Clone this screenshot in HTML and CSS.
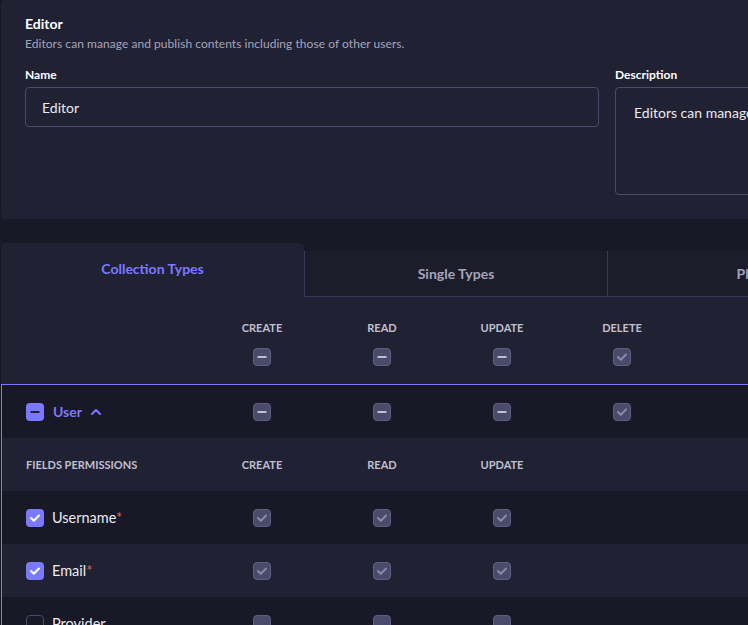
FILE: index.html
```html
<!DOCTYPE html>
<html lang="en">
<head>
<meta charset="utf-8">
<title>Editor role</title>
<link rel="stylesheet" href="styles.css">
</head>
<body>
<div class="page">
  <section class="card">
    <h1 class="title">Editor</h1>
    <p class="subtitle">Editors can manage and publish contents including those of other users.</p>
    <div class="form">
      <div class="field">
        <label class="label">Name</label>
        <div class="input">Editor</div>
      </div>
      <div class="field">
        <label class="label">Description</label>
        <div class="textarea">Editors can manage and publish contents including those of other users.</div>
      </div>
    </div>
  </section>

  <section class="perms">
    <div class="tabs">
      <div class="tab active">Collection Types</div>
      <div class="tab">Single Types</div>
      <div class="tab">Plugins</div>
      <div class="tab">Settings</div>
    </div>
    <div class="panel">
      <div class="grid head">
        <div></div>
        <div class="colhead"><span class="collabel">Create</span><span class="cb cb-dis"><svg viewBox="0 0 18 18"><rect x="4.5" y="8" width="9" height="2" rx="0.5" class="mark-minus"/></svg></span></div>
        <div class="colhead"><span class="collabel">Read</span><span class="cb cb-dis"><svg viewBox="0 0 18 18"><rect x="4.5" y="8" width="9" height="2" rx="0.5" class="mark-minus"/></svg></span></div>
        <div class="colhead"><span class="collabel">Update</span><span class="cb cb-dis"><svg viewBox="0 0 18 18"><rect x="4.5" y="8" width="9" height="2" rx="0.5" class="mark-minus"/></svg></span></div>
        <div class="colhead"><span class="collabel">Delete</span><span class="cb cb-dis"><svg viewBox="0 0 18 18"><polyline points="5,9 7.8,11.8 13,6.5" class="mark-check"/></svg></span></div>
      </div>

      <div class="block">
        <div class="grid row dark">
          <div class="namecell user">
            <span class="cb cb-on"><svg viewBox="0 0 18 18"><rect x="4.5" y="8" width="9" height="2" rx="0.5" class="mark-minus-dark"/></svg></span>
            <span class="username">User</span>
            <svg class="chev" viewBox="0 0 10 6"><polyline points="1,5 5,1 9,5"/></svg>
          </div>
          <div class="cell"><span class="cb cb-dis"><svg viewBox="0 0 18 18"><rect x="4.5" y="8" width="9" height="2" rx="0.5" class="mark-minus"/></svg></span></div>
          <div class="cell"><span class="cb cb-dis"><svg viewBox="0 0 18 18"><rect x="4.5" y="8" width="9" height="2" rx="0.5" class="mark-minus"/></svg></span></div>
          <div class="cell"><span class="cb cb-dis"><svg viewBox="0 0 18 18"><rect x="4.5" y="8" width="9" height="2" rx="0.5" class="mark-minus"/></svg></span></div>
          <div class="cell"><span class="cb cb-dis"><svg viewBox="0 0 18 18"><polyline points="5,9 7.8,11.8 13,6.5" class="mark-check"/></svg></span></div>
        </div>

        <div class="grid row light">
          <div class="namecell"><span class="collabel">Fields Permissions</span></div>
          <div class="cell"><span class="collabel">Create</span></div>
          <div class="cell"><span class="collabel">Read</span></div>
          <div class="cell"><span class="collabel">Update</span></div>
          <div class="cell"></div>
        </div>

        <div class="grid row dark">
          <div class="namecell">
            <span class="cb cb-on"><svg viewBox="0 0 18 18"><polyline points="5,9 7.8,11.8 13,6.5" class="mark-check-white"/></svg></span>
            <span class="fieldname">Username<span class="req">*</span></span>
          </div>
          <div class="cell"><span class="cb cb-dis"><svg viewBox="0 0 18 18"><polyline points="5,9 7.8,11.8 13,6.5" class="mark-check"/></svg></span></div>
          <div class="cell"><span class="cb cb-dis"><svg viewBox="0 0 18 18"><polyline points="5,9 7.8,11.8 13,6.5" class="mark-check"/></svg></span></div>
          <div class="cell"><span class="cb cb-dis"><svg viewBox="0 0 18 18"><polyline points="5,9 7.8,11.8 13,6.5" class="mark-check"/></svg></span></div>
          <div class="cell"></div>
        </div>

        <div class="grid row light">
          <div class="namecell">
            <span class="cb cb-on"><svg viewBox="0 0 18 18"><polyline points="5,9 7.8,11.8 13,6.5" class="mark-check-white"/></svg></span>
            <span class="fieldname">Email<span class="req">*</span></span>
          </div>
          <div class="cell"><span class="cb cb-dis"><svg viewBox="0 0 18 18"><polyline points="5,9 7.8,11.8 13,6.5" class="mark-check"/></svg></span></div>
          <div class="cell"><span class="cb cb-dis"><svg viewBox="0 0 18 18"><polyline points="5,9 7.8,11.8 13,6.5" class="mark-check"/></svg></span></div>
          <div class="cell"><span class="cb cb-dis"><svg viewBox="0 0 18 18"><polyline points="5,9 7.8,11.8 13,6.5" class="mark-check"/></svg></span></div>
          <div class="cell"></div>
        </div>

        <div class="grid row dark">
          <div class="namecell">
            <span class="cb cb-empty"></span>
            <span class="fieldname">Provider</span>
          </div>
          <div class="cell"><span class="cb cb-dis"></span></div>
          <div class="cell"><span class="cb cb-dis"></span></div>
          <div class="cell"><span class="cb cb-dis"></span></div>
          <div class="cell"></div>
        </div>
      </div>
    </div>
  </section>
</div>
</body>
</html>
```

FILE: styles.css
```css
html, body {
  margin: 0;
  padding: 0;
  overflow: hidden;
  background: #181826;
}

body {
  width: 748px;
  height: 625px;
  font-family: Lato, "Noto Sans", sans-serif;
  color: #ffffff;
}

.page {
  padding-left: 1px;
  width: 1212px;
}

/* Top card */
.card {
  background: #212134;
  border-radius: 4px;
  padding: 16px 24px 24px;
}

.title {
  margin: 0;
  font-size: 14px;
  line-height: 16px;
  font-weight: 700;
  color: #ffffff;
}

.subtitle {
  margin: 4px 0 0;
  font-size: 12px;
  line-height: 16px;
  color: #a5a5ba;
  letter-spacing: 0.05px;
}

.form {
  display: grid;
  grid-template-columns: 574px 574px;
  column-gap: 16px;
  margin-top: 15px;
}

.label {
  display: block;
  font-size: 12px;
  line-height: 16px;
  font-weight: 700;
  color: #ffffff;
  margin-bottom: 4px;
}

.input {
  box-sizing: border-box;
  height: 40px;
  border: 1px solid #4a4a6a;
  border-radius: 4px;
  padding: 0 16px;
  display: flex;
  align-items: center;
  font-size: 14px;
  color: #eaeaef;
}

.textarea {
  box-sizing: border-box;
  height: 108px;
  border: 1px solid #4a4a6a;
  border-radius: 4px;
  padding: 15px 18px;
  font-size: 14px;
  line-height: 20px;
  color: #eaeaef;
  white-space: nowrap;
  overflow: hidden;
}

/* Permissions */
.perms {
  margin-top: 24px;
}

.tabs {
  display: flex;
  align-items: flex-end;
  height: 54px;
}

.tab {
  box-sizing: border-box;
  flex: 0 0 303px;
  height: 46px;
  padding-bottom: 1px;
  display: flex;
  align-items: center;
  justify-content: center;
  font-size: 14px;
  font-weight: 700;
  color: #a5a5ba;
  background: #1c1c2b;
  border-left: 1px solid #3a3a58;
  border-bottom: 1px solid #3a3a58;
}

.tab.active {
  height: 54px;
  padding-bottom: 3px;
  background: #212134;
  color: #7b79ff;
  border: none;
  border-radius: 4px 4px 0 0;
}

.panel {
  background: #212134;
}

.grid {
  display: grid;
  grid-template-columns: 200px repeat(4, 120px) 1fr;
  align-items: center;
}

.head {
  border-left: 1px solid transparent;
  padding: 23px 0 18px;
}

.colhead {
  display: flex;
  flex-direction: column;
  align-items: center;
  gap: 12px;
}

.collabel {
  font-size: 11px;
  line-height: 16px;
  font-weight: 700;
  text-transform: uppercase;
  color: #c0c0cf;
}

.block {
  border: 1px solid #7b79ff;
  border-right: none;
}

.row {
  height: 53px;
}

.row.dark {
  background: #181826;
}

.row.light {
  background: #212134;
}

.namecell {
  display: flex;
  align-items: center;
  gap: 8px;
  padding-left: 24px;
}

.namecell.user {
  gap: 9px;
}

.username {
  font-size: 14px;
  font-weight: 700;
  color: #7b79ff;
}

.chev {
  width: 10px;
  height: 6px;
  fill: none;
  stroke: #7b79ff;
  stroke-width: 2;
  stroke-linecap: round;
  stroke-linejoin: round;
}

.fieldname {
  font-size: 14.5px;
  color: #eaeaef;
  white-space: nowrap;
}

.req {
  color: #ee5e52;
}

.cell {
  display: flex;
  justify-content: center;
  align-items: center;
}

/* Checkboxes */
.cb {
  box-sizing: border-box;
  display: inline-block;
  width: 18px;
  height: 18px;
  border-radius: 4px;
  flex: 0 0 auto;
}

.cb svg {
  display: block;
  width: 100%;
  height: 100%;
}

.cb-dis {
  background: #4a4a6a;
  border: 1px solid #5e5e80;
}

.cb-dis svg {
  margin: -1px;
  width: 18px;
  height: 18px;
}

.cb-on {
  background: #7b79ff;
}

.cb-empty {
  border: 1px solid #4a4a6a;
  background: #181826;
}

.mark-minus {
  fill: #c0c0cf;
}

.mark-minus-dark {
  fill: #212134;
}

.mark-check {
  fill: none;
  stroke: #8e8ea9;
  stroke-width: 1.8;
  stroke-linecap: round;
  stroke-linejoin: round;
}

.mark-check-white {
  fill: none;
  stroke: #ffffff;
  stroke-width: 2;
  stroke-linecap: round;
  stroke-linejoin: round;
}
```
